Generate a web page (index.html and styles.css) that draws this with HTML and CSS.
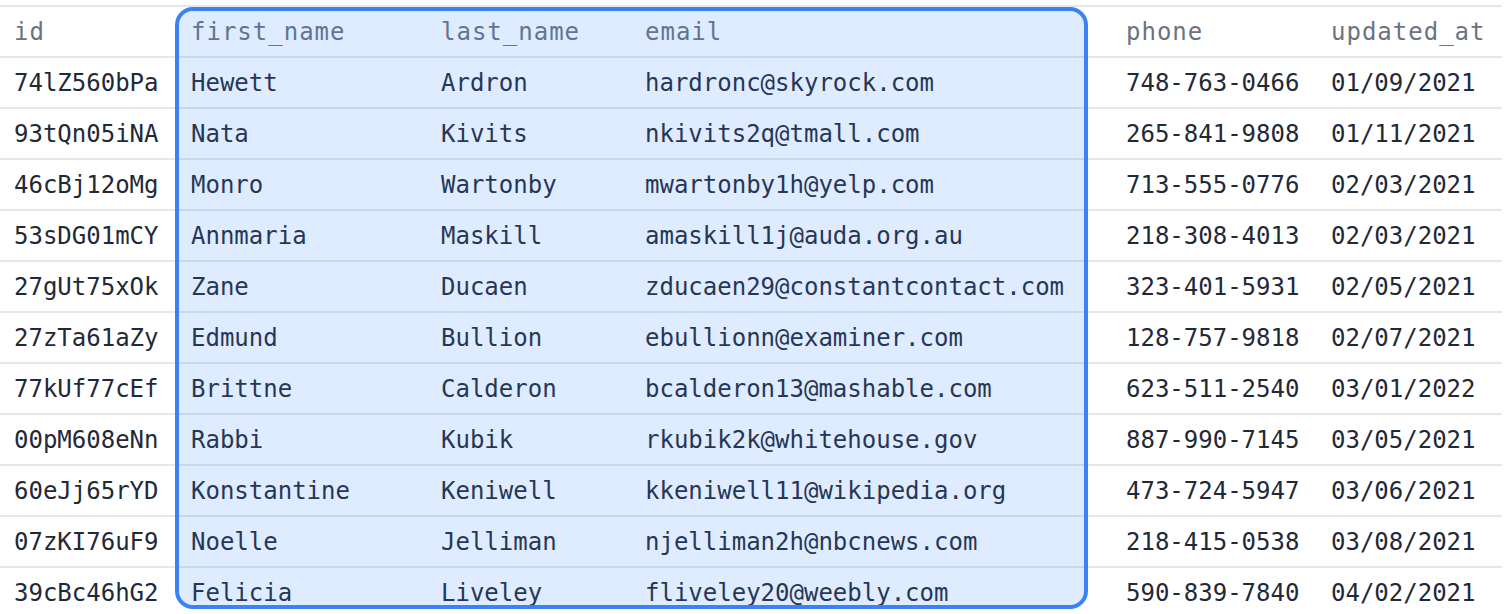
FILE: index.html
```html
<!DOCTYPE html>
<html>
<head>
<meta charset="utf-8">
<link rel="stylesheet" href="styles.css">
</head>
<body>
<div class="wrap">
  <div class="table">
    <div class="row head"><div>id</div><div>first_name</div><div>last_name</div><div>email</div><div>phone</div><div>updated_at</div></div>
    <div class="row"><div>74lZ560bPa</div><div>Hewett</div><div>Ardron</div><div>hardronc@skyrock.com</div><div>748-763-0466</div><div>01/09/2021</div></div>
    <div class="row"><div>93tQn05iNA</div><div>Nata</div><div>Kivits</div><div>nkivits2q@tmall.com</div><div>265-841-9808</div><div>01/11/2021</div></div>
    <div class="row"><div>46cBj12oMg</div><div>Monro</div><div>Wartonby</div><div>mwartonby1h@yelp.com</div><div>713-555-0776</div><div>02/03/2021</div></div>
    <div class="row"><div>53sDG01mCY</div><div>Annmaria</div><div>Maskill</div><div>amaskill1j@auda.org.au</div><div>218-308-4013</div><div>02/03/2021</div></div>
    <div class="row"><div>27gUt75xOk</div><div>Zane</div><div>Ducaen</div><div>zducaen29@constantcontact.com</div><div>323-401-5931</div><div>02/05/2021</div></div>
    <div class="row"><div>27zTa61aZy</div><div>Edmund</div><div>Bullion</div><div>ebullionn@examiner.com</div><div>128-757-9818</div><div>02/07/2021</div></div>
    <div class="row"><div>77kUf77cEf</div><div>Brittne</div><div>Calderon</div><div>bcalderon13@mashable.com</div><div>623-511-2540</div><div>03/01/2022</div></div>
    <div class="row"><div>00pM608eNn</div><div>Rabbi</div><div>Kubik</div><div>rkubik2k@whitehouse.gov</div><div>887-990-7145</div><div>03/05/2021</div></div>
    <div class="row"><div>60eJj65rYD</div><div>Konstantine</div><div>Keniwell</div><div>kkeniwell11@wikipedia.org</div><div>473-724-5947</div><div>03/06/2021</div></div>
    <div class="row"><div>07zKI76uF9</div><div>Noelle</div><div>Jelliman</div><div>njelliman2h@nbcnews.com</div><div>218-415-0538</div><div>03/08/2021</div></div>
    <div class="row"><div>39cBc46hG2</div><div>Felicia</div><div>Liveley</div><div>fliveley20@weebly.com</div><div>590-839-7840</div><div>04/02/2021</div></div>
  </div>
  <div class="highlight"></div>
</div>
</body>
</html>
```
FILE: styles.css
```css
html, body {
  margin: 0;
  padding: 0;
  background: #ffffff;
  overflow: hidden;
}
body {
  width: 1504px;
  height: 614px;
}
.wrap {
  position: relative;
  padding-top: 5px;
  width: 1502px;
}
.table {
  font-family: "DejaVu Sans Mono", "Liberation Mono", monospace;
  font-size: 24px;
  color: #1f2937;
}
.row {
  display: grid;
  grid-template-columns: 177px 250px 204px 481px 205px 185px;
  height: 49px;
  align-items: center;
  border-top: 2px solid #e5e7eb;
  white-space: nowrap;
}
.row > div {
  padding-left: 14px;
}
.row.head {
  color: #6b7280;
  letter-spacing: 1px;
}
.highlight {
  position: absolute;
  left: 175px;
  top: 7px;
  width: 905px;
  height: 594px;
  border: 4px solid #3b82f6;
  border-radius: 18px;
  background: rgba(59, 130, 246, 0.16);
  pointer-events: none;
}
```
